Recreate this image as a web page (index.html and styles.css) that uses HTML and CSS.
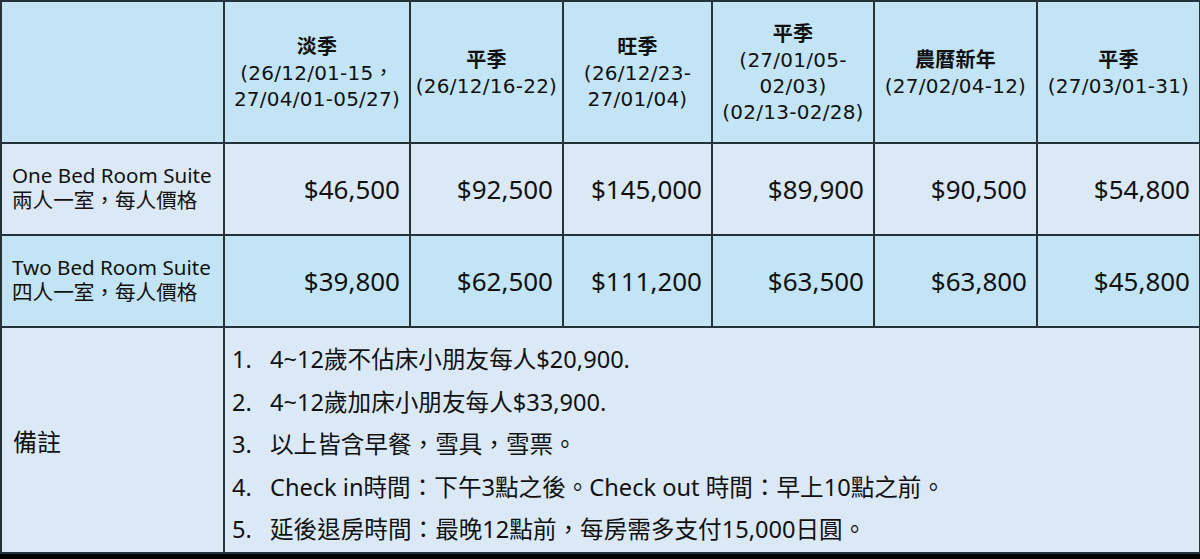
FILE: index.html
```html
<!DOCTYPE html>
<html lang="zh-TW">
<head>
<meta charset="utf-8">
<link rel="stylesheet" href="styles.css">
</head>
<body>
<table class="price-table">
  <colgroup>
    <col class="c0"><col class="c1"><col class="c2"><col class="c3"><col class="c4"><col class="c5"><col class="c6">
  </colgroup>
  <tr class="head">
    <th></th>
    <th><span class="season">淡季</span><br>(26/12/01-15，<br>27/04/01-05/27)</th>
    <th><span class="season">平季</span><br>(26/12/16-22)</th>
    <th><span class="season">旺季</span><br>(26/12/23-<br>27/01/04)</th>
    <th><span class="season">平季</span><br>(27/01/05-<br>02/03)<br>(02/13-02/28)</th>
    <th><span class="season">農曆新年</span><br>(27/02/04-12)</th>
    <th><span class="season">平季</span><br>(27/03/01-31)</th>
  </tr>
  <tr class="row light">
    <td class="room"><div class="line-en">One Bed Room Suite</div><div class="line-zh">兩人一室，每人價格</div></td>
    <td class="price">$46,500</td>
    <td class="price">$92,500</td>
    <td class="price">$145,000</td>
    <td class="price">$89,900</td>
    <td class="price">$90,500</td>
    <td class="price">$54,800</td>
  </tr>
  <tr class="row blue">
    <td class="room"><div class="line-en">Two Bed Room Suite</div><div class="line-zh">四人一室，每人價格</div></td>
    <td class="price">$39,800</td>
    <td class="price">$62,500</td>
    <td class="price">$111,200</td>
    <td class="price">$63,500</td>
    <td class="price">$63,800</td>
    <td class="price">$45,800</td>
  </tr>
  <tr class="notes light">
    <td class="room note-label">備註</td>
    <td colspan="6" class="note-cell">
      <div class="note"><span class="num">1.</span><span>4~12歲不佔床小朋友每人$20,900.</span></div>
      <div class="note"><span class="num">2.</span><span>4~12歲加床小朋友每人$33,900.</span></div>
      <div class="note"><span class="num">3.</span><span>以上皆含早餐，雪具，雪票。</span></div>
      <div class="note"><span class="num">4.</span><span>Check in時間：下午3點之後。Check out 時間：早上10點之前。</span></div>
      <div class="note"><span class="num">5.</span><span>延後退房時間：最晚12點前，每房需多支付15,000日圓。</span></div>
    </td>
  </tr>
</table>
</body>
</html>
```

FILE: styles.css
```css
html, body {
  margin: 0;
  padding: 0;
  background: #000;
}

.price-table {
  border-collapse: collapse;
  table-layout: fixed;
  width: 1199px;
  font-family: "Noto Sans", "Noto Sans CJK TC", sans-serif;
  color: #111;
}

.c0 { width: 223px; }
.c1 { width: 186px; }
.c2 { width: 153px; }
.c3 { width: 149px; }
.c4 { width: 162px; }
.c5 { width: 163px; }
.c6 { width: 163px; }

.price-table th,
.price-table td {
  border: 2px solid #26323a;
  padding: 0;
}

.head {
  height: 142px;
  background: #c2e4f5;
}

.head th {
  font-family: "DejaVu Sans", "Noto Sans CJK TC", sans-serif;
  font-weight: normal;
  font-size: 20px;
  letter-spacing: 0.25px;
  line-height: 26px;
  text-align: center;
  vertical-align: middle;
}

.season {
  font-family: "Noto Sans CJK TC", sans-serif;
  font-weight: 600;
}

.row { height: 92px; }
.light { background: #dbe9f6; }
.blue { background: #c2e4f5; }

.room {
  font-size: 20.6px;
  padding-left: 10px !important;
  vertical-align: middle;
  text-align: left;
}

.line-en {
  line-height: 22px;
  height: 22px;
  margin-top: -2px;
}

.line-zh {
  font-family: "Liberation Sans", "Noto Sans CJK TC", sans-serif;
  line-height: 24px;
  height: 24px;
  margin-top: 3px;
}

.note-label {
  font-size: 24px;
  padding-left: 11px !important;
}

.price {
  font-size: 26px;
  text-align: right;
  padding-right: 9px !important;
  vertical-align: middle;
}

.notes { height: 226px; }

.note-cell {
  padding: 10px 0 0 7px !important;
  vertical-align: top;
}

.note {
  display: flex;
  font-size: 23.6px;
  height: 42.5px;
  line-height: 42.5px;
}

.num {
  width: 38px;
  flex: none;
}
```
